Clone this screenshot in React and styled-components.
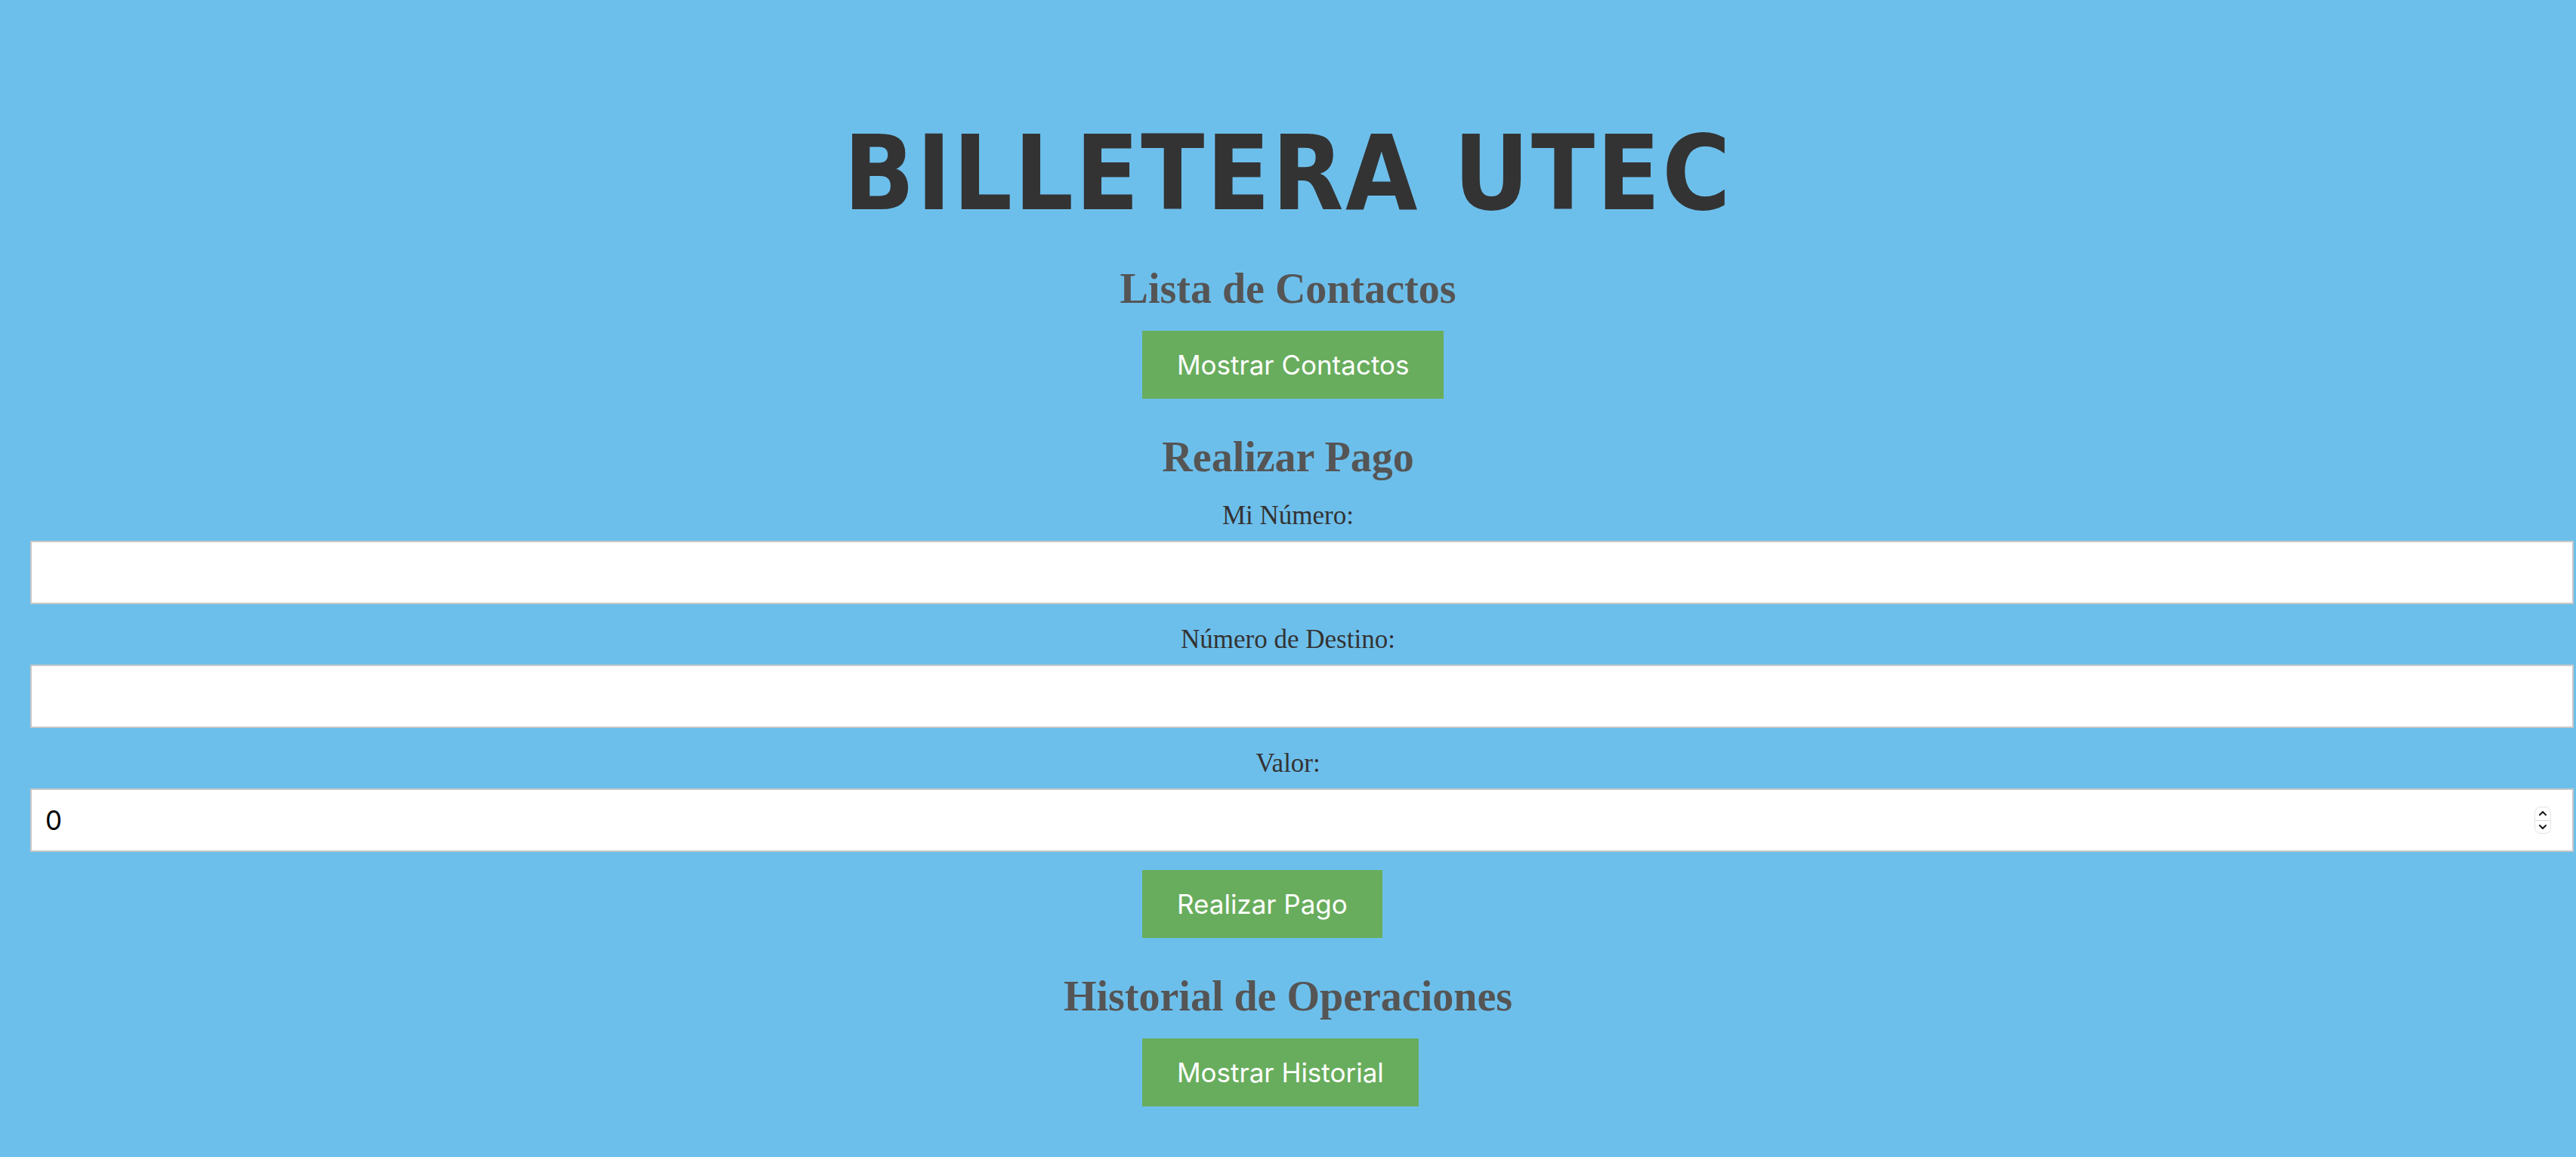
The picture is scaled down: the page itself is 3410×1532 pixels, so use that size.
import React, { useState } from 'react';
import styled, { createGlobalStyle } from 'styled-components';

const GlobalStyle = createGlobalStyle`
  html, body {
    margin: 0;
    padding: 0;
    background: #6dbfeb;
    overflow: hidden;
  }
  body {
    font-family: "Liberation Serif", "Times New Roman", serif;
  }
`;

const Page = styled.div`
  height: 1532px;
  overflow: hidden;
  padding-top: 161px;
  box-sizing: border-box;
  background: #6dbfeb;
  text-align: center;
`;

const Title = styled.h1`
  margin: 0;
  font-family: "DejaVu Sans Condensed", "DejaVu Sans", Verdana, sans-serif;
  font-stretch: condensed;
  font-weight: 700;
  font-size: 137px;
  line-height: 137px;
  letter-spacing: 2.5px;
  color: #333;
`;

const Heading = styled.h2`
  margin: ${p => p.$top}px 0 0;
  font-family: "Liberation Serif", "Times New Roman", serif;
  font-weight: 700;
  font-size: 56px;
  line-height: 56px;
  color: #555;
`;

const ButtonRow = styled.div`
  display: flex;
  justify-content: flex-start;
  padding-left: 1512px;
  margin-top: ${p => p.$top}px;
`;

const Button = styled.button`
  border: none;
  border-radius: 0;
  background: #68ad5d;
  color: #fff;
  font-family: Inter, "Liberation Sans", Arial, sans-serif;
  font-size: 35px;
  line-height: 42px;
  padding: 24px 46px;
  cursor: pointer;
  &:hover {
    background: #5c9f52;
  }
`;

const Form = styled.form`
  margin: 0;
`;

const Label = styled.label`
  display: block;
  margin-top: ${p => p.$top}px;
  font-family: "Liberation Serif", "Times New Roman", serif;
  font-size: 35px;
  line-height: 40px;
  color: #333;
`;

const Field = styled.div`
  position: relative;
  margin-top: 13px;
  padding: 0 3px 0 40px;
`;

const Input = styled.input`
  display: block;
  width: 100%;
  height: 84px;
  box-sizing: border-box;
  border: 2px solid #c8c8c8;
  border-radius: 0;
  background: #fff;
  padding: 0 18px;
  font-family: Inter, "Liberation Sans", Arial, sans-serif;
  font-size: 35px;
  color: #000;
  outline: none;
  -moz-appearance: textfield;
  &::-webkit-outer-spin-button,
  &::-webkit-inner-spin-button {
    -webkit-appearance: none;
    margin: 0;
  }
`;

const Spinner = styled.div`
  position: absolute;
  right: 33px;
  top: 24px;
  width: 22px;
  height: 36px;
  box-sizing: border-box;
  border: 1px solid #e2e2e2;
  border-radius: 8px;
  background: #fff;
  display: flex;
  flex-direction: column;
  overflow: hidden;
`;

const SpinHalf = styled.div`
  flex: 1;
  display: flex;
  align-items: center;
  justify-content: center;
  border-top: ${p => (p.$down ? '1px solid #dcdcdc' : 'none')};
`;

const Chevron = ({ down }) => (
  <svg width="12" height="8" viewBox="0 0 12 8">
    <path
      d={down ? 'M2 2 L6 6 L10 2' : 'M2 6 L6 2 L10 6'}
      fill="none"
      stroke="#222"
      strokeWidth="2.2"
      strokeLinecap="round"
      strokeLinejoin="round"
    />
  </svg>
);

export default function App() {
  const [origen, setOrigen] = useState('');
  const [destino, setDestino] = useState('');
  const [valor, setValor] = useState(0);

  return (
    <>
      <GlobalStyle />
      <Page>
        <Title>BILLETERA UTEC</Title>

        <Heading $top={56}>Lista de Contactos</Heading>
        <ButtonRow $top={28}>
          <Button type="button">Mostrar Contactos</Button>
        </ButtonRow>

        <Heading $top={49}>Realizar Pago</Heading>
        <Form onSubmit={e => e.preventDefault()}>
          <Label $top={30} htmlFor="origen">Mi Número:</Label>
          <Field>
            <Input id="origen" type="text" value={origen} onChange={e => setOrigen(e.target.value)} />
          </Field>

          <Label $top={27} htmlFor="destino">Número de Destino:</Label>
          <Field>
            <Input id="destino" type="text" value={destino} onChange={e => setDestino(e.target.value)} />
          </Field>

          <Label $top={27} htmlFor="valor">Valor:</Label>
          <Field>
            <Input id="valor" type="number" value={valor} onChange={e => setValor(e.target.value)} />
            <Spinner>
              <SpinHalf><Chevron /></SpinHalf>
              <SpinHalf $down><Chevron down /></SpinHalf>
            </Spinner>
          </Field>

          <ButtonRow $top={24}>
            <Button type="submit">Realizar Pago</Button>
          </ButtonRow>
        </Form>

        <Heading $top={49}>Historial de Operaciones</Heading>
        <ButtonRow $top={28}>
          <Button type="button">Mostrar Historial</Button>
        </ButtonRow>
      </Page>
    </>
  );
}
